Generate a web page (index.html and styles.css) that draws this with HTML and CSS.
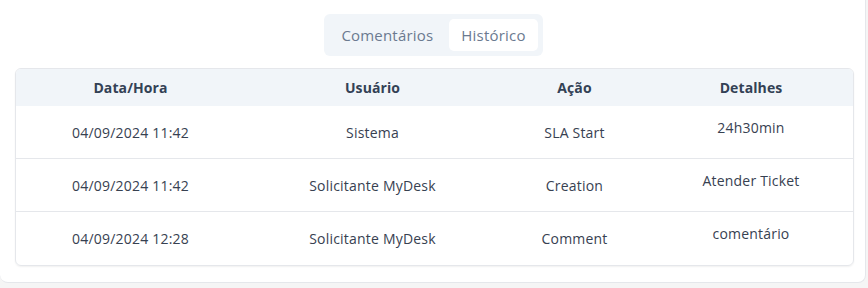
FILE: index.html
```html
<!DOCTYPE html>
<html lang="pt">
<head>
<meta charset="utf-8">
<link rel="stylesheet" href="styles.css">
</head>
<body>
<div class="card">
  <div class="tabs">
    <button class="tab">Comentários</button>
    <button class="tab active">Histórico</button>
  </div>
  <div class="table-wrap">
    <table class="history">
      <thead>
        <tr>
          <th class="c1">Data/Hora</th>
          <th class="c2">Usuário</th>
          <th class="c3">Ação</th>
          <th class="c4">Detalhes</th>
        </tr>
      </thead>
      <tbody>
        <tr>
          <td>04/09/2024 11:42</td>
          <td>Sistema</td>
          <td>SLA Start</td>
          <td class="details"><p>24h30min</p></td>
        </tr>
        <tr>
          <td>04/09/2024 11:42</td>
          <td>Solicitante MyDesk</td>
          <td>Creation</td>
          <td class="details"><p>Atender Ticket</p></td>
        </tr>
        <tr>
          <td>04/09/2024 12:28</td>
          <td>Solicitante MyDesk</td>
          <td>Comment</td>
          <td class="details"><p>comentário</p></td>
        </tr>
      </tbody>
    </table>
  </div>
</div>
</body>
</html>
```

FILE: styles.css
```css
html, body {
  margin: 0;
  padding: 0;
  background: #f5f5f5;
  font-family: "Open Sans", "Liberation Sans", sans-serif;
}
.card {
  width: 866px;
  height: 283px;
  box-sizing: border-box;
  background: #ffffff;
  border-right: 1px solid #e5e7eb;
  border-bottom: 1px solid #e5e7eb;
  border-radius: 0 0 8px 8px;
  padding: 14px 13px 0 16px;
  display: flex;
  flex-direction: column;
  align-items: center;
}
.tabs {
  display: flex;
  gap: 4px;
  background: #f1f5f9;
  border-radius: 6px;
  padding: 5px;
  height: 42px;
  box-sizing: border-box;
  margin-left: -1px;
}
.tab {
  border: none;
  background: transparent;
  font-family: inherit;
  font-size: 15px;
  letter-spacing: 0.2px;
  color: #6b7a90;
  padding: 0 12px;
  height: 32px;
  border-radius: 5px;
  line-height: 32px;
  margin: 0;
}
.tab.active {
  background: #ffffff;
}
.table-wrap {
  margin-top: 12px;
  width: 837px;
  border: 1px solid #e5e7eb;
  border-radius: 6px;
  overflow: hidden;
  box-shadow: 0 1px 2px rgba(0,0,0,0.06);
}
.history {
  width: 100%;
  border-collapse: collapse;
  font-size: 14px;
  color: #374151;
}
.history th {
  background: #f1f5f9;
  font-weight: 700;
  color: #334155;
  height: 37px;
  padding: 0;
  text-align: center;
  letter-spacing: 0.1px;
}
.history td {
  height: 52px;
  padding: 0;
  text-align: center;
  border-top: 1px solid #e5e7eb;
  letter-spacing: 0.2px;
}
.history tbody tr:first-child td {
  border-top: none;
}
.history tbody tr:last-child td {
  height: 53px;
}
.c1 { width: 230px; }
.c2 { width: 254px; }
.c3 { width: 150px; }
.details p {
  margin: 0;
  position: relative;
  top: -5px;
}
```
